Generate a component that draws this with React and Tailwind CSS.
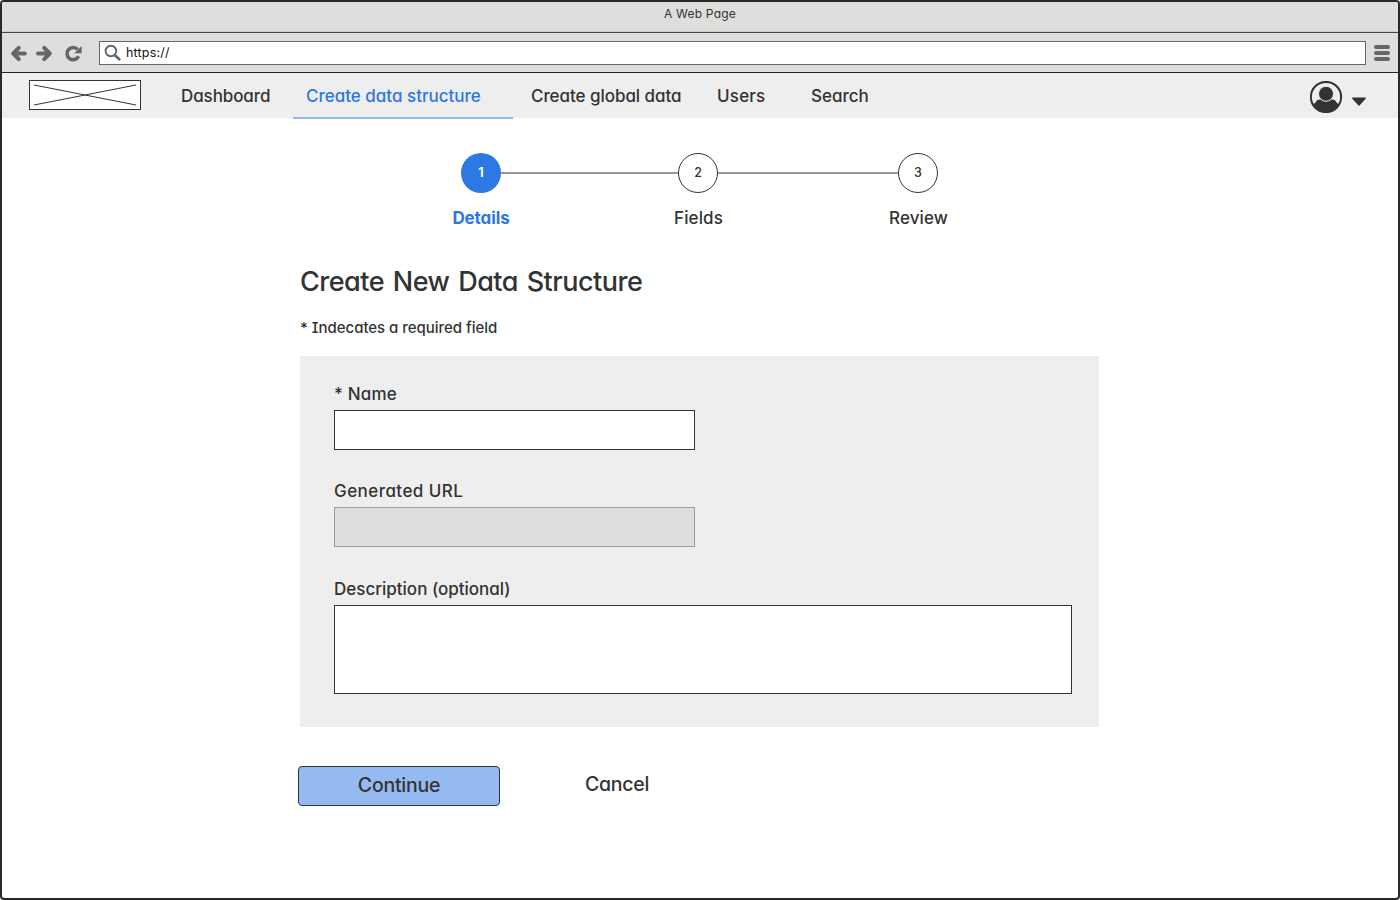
function BrowserBar() {
  return (
    <header className="flex flex-none flex-col border-b border-[#231f20] bg-[#dededc]">
      <div className="flex h-[31px] flex-none justify-center border-b border-[#444] pt-[3px] text-xs leading-[17px] tracking-[0.2px] text-[#333] shadow-[inset_0_-1px_0_#cfcdca]">
        A Web Page
      </div>
      <div className="flex h-[39px] items-center">
        <svg className="ml-2 h-6 w-20 flex-none" viewBox="0 0 80 24" fill="none" stroke="#666" strokeWidth="4">
          <path d="M3.5 12.5H14.8M8.8 6.900L3.200 12.500L8.800 18.100" strokeLinecap="round" strokeLinejoin="round" />
          <path d="M28 12.500H39.300M34.200 6.900L39.800 12.500L34.200 18.100" strokeLinecap="round" strokeLinejoin="round" />
          <path d="M67.600 8.400A6.100 6.100 0 1 0 68.600 15.200" strokeWidth="3.600" />
          <path d="M71.700 5V12.300H64.200Z" fill="#666" stroke="none" />
        </svg>
        <div className="ml-[9px] flex h-6 w-[1267px] items-center border border-[#666] bg-white">
          <svg className="ml-1 h-[18px] w-[18px]" viewBox="0 0 18 18" fill="none" stroke="#666">
            <circle cx="6.9" cy="7" r="5.300" strokeWidth="1.900" />
            <path d="M11.200 11.400L15.200 15.300" strokeWidth="2.800" strokeLinecap="round" />
          </svg>
          <span className="ml-1 mt-px text-[12.5px] leading-5 tracking-[0.2px] text-[#111]">https://</span>
        </div>
        <div className="ml-2 flex w-4 flex-col gap-0.5">
          <div className="h-1 rounded-full bg-[#666]" />
          <div className="h-1 rounded-full bg-[#666]" />
          <div className="h-1 rounded-full bg-[#666]" />
        </div>
      </div>
    </header>
  );
}

function NavBar() {
  return (
    <nav className="flex h-[45px] flex-none items-start bg-[#eee] text-[17px] font-medium leading-[46px]">
      <div className="ml-[27px] mt-[7px] flex h-[30px] w-28 flex-none border border-[#333] bg-white">
        <svg className="h-7 w-[110px]" viewBox="0 0 110 28" stroke="#333" strokeWidth="1">
          <path d="M4 4L106 24M4 24L106 4" />
        </svg>
      </div>
      <a className="ml-10 w-28 tracking-[-0.1px]">Dashboard</a>
      <a className="h-[46px] w-[220px] flex-none border-b-2 border-[#8fb8f3] pl-[13px] text-[#2c78e4]">
        Create data structure
      </a>
      <a className="ml-[18px] w-[186px] tracking-[-0.05px]">Create global data</a>
      <a className="w-[94px] tracking-[0.2px]">Users</a>
      <a>Search</a>
      <svg className="ml-auto mr-8 mt-2 h-8 w-14" viewBox="0 0 56 32" fill="none">
        <defs>
          <clipPath id="avatar-ring">
            <circle cx="16" cy="16" r="15.500" />
          </clipPath>
        </defs>
        <path
          d="M2 24.500L5.500 21.500Q6.500 18.400 10 18.400H22Q25.500 18.400 26.500 21.500L30 24.500L24 32H8Z"
          fill="#333"
          clipPath="url(#avatar-ring)"
        />
        <circle cx="16" cy="12.800" r="7.500" fill="#333" stroke="#eee" strokeWidth="1" />
        <circle cx="16" cy="16" r="15.100" stroke="#333" strokeWidth="2" />
        <path d="M42.800 17.300H55.200L49 24Z" fill="#333" stroke="#333" strokeWidth="1.400" strokeLinejoin="round" />
      </svg>
    </nav>
  );
}

function Step({ number, label, active }) {
  return (
    <li className="flex w-10 flex-none flex-col items-center">
      <span
        className={
          active
            ? "flex size-10 items-center justify-center rounded-full bg-[#2c78e4] text-[12.5px] font-bold text-white"
            : "flex size-10 items-center justify-center rounded-full border border-[#333] bg-white text-[12.5px] font-medium"
        }
      >
        {number}
      </span>
      <span
        className={
          active
            ? "mt-[13px] whitespace-nowrap text-[17px] font-bold leading-6 tracking-[-0.1px] text-[#2c78e4]"
            : "mt-[13px] whitespace-nowrap pl-px text-[17px] font-medium leading-6 tracking-[0.1px]"
        }
      >
        {label}
      </span>
    </li>
  );
}

function Field({ label, className, labelClass, children }) {
  return (
    <label className={className}>
      <span className={labelClass}>{label}</span>
      {children}
    </label>
  );
}

export default function App() {
  return (
    <div className="h-[900px] w-[1400px] bg-white">
      <div className="flex h-full flex-col overflow-hidden rounded-[4px] border-2 border-[#2b2829] bg-white font-['Inter',sans-serif] text-[#333] [font-feature-settings:'cv11','cv08']">
        <BrowserBar />
        <NavBar />
        <ol className="ml-[459px] mt-[35px] flex flex-none">
          <Step number="1" label="Details" active />
          <li className="mt-[19px] h-0.5 w-[177px] bg-[#999]" />
          <Step number="2" label="Fields" />
          <li className="mt-[19px] h-0.5 w-[180px] bg-[#999]" />
          <Step number="3" label="Review" />
        </ol>
        <main className="ml-[298px] flex w-[799px] flex-col">
          <h1 className="mt-[34px] text-[27px] font-medium leading-[36px] tracking-[-0.5px] [word-spacing:2px]">
            Create New Data Structure
          </h1>
          <p className="mt-[18px] text-[15px] font-medium leading-5 tracking-[-0.03px]">* Indecates a required field</p>
          <form className="mt-[18px] flex h-[371px] flex-col bg-[#eee] px-[34px] pt-[26px] text-[17px] font-medium leading-6">
            <Field label="* Name" className="flex flex-col" labelClass="tracking-[0.2px]">
              <input className="mt-1 h-10 w-[361px] border border-[#333] bg-white" />
            </Field>
            <Field label="Generated URL" className="mt-[29px] flex flex-col" labelClass="tracking-[0.45px]">
              <input disabled className="mt-1 h-10 w-[361px] border border-[#999] bg-[#ddd]" />
            </Field>
            <Field label="Description (optional)" className="mt-[30px] flex flex-col" labelClass="">
              <textarea className="mt-1 h-[89px] w-[738px] flex-none resize-none border border-[#333] bg-white" />
            </Field>
          </form>
          <div className="-ml-0.5 mt-[39px] flex text-[19.5px] font-medium tracking-[-0.25px]">
            <button className="h-10 w-[202px] rounded-[4px] border border-[#333] bg-[#94baf1] pb-0.5 leading-9">Continue</button>
            <button className="ml-[85px] h-10 pb-1 leading-9">Cancel</button>
          </div>
        </main>
      </div>
    </div>
  );
}
